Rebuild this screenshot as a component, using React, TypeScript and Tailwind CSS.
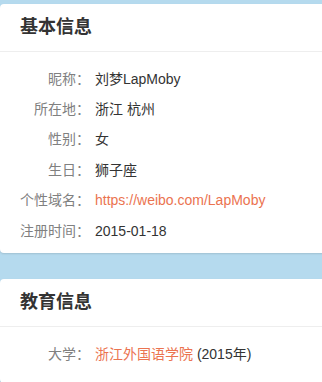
import React from "react";

// Profile info cards — label / value rows, weibo style
const BASIC = [
  { label: "昵称", value: "刘梦LapMoby" },
  { label: "所在地", value: "浙江 杭州" },
  { label: "性别", value: "女" },
  { label: "生日", value: "狮子座" },
  { label: "个性域名", value: "https://weibo.com/LapMoby", link: true },
  { label: "注册时间", value: "2015-01-18" },
];

function Row({ label, children }: { label: string; children: React.ReactNode }) {
  return (
    <div className="flex items-center h-[30.4px] text-[14px]">
      <span className="w-[70px] text-right text-[#808080] shrink-0">{label}：</span>
      <span className="ml-[5px] text-[#333] whitespace-nowrap">{children}</span>
    </div>
  );
}

function Card({ title, children, className = "" }: { title: string; children: React.ReactNode; className?: string }) {
  return (
    <div className={`bg-white rounded-l-[4px] w-[calc(100%+8px)] shadow-[0_1px_2px_rgba(0,0,0,0.12)] ${className}`}>
      <div className="h-[48px] flex items-center px-[20px] border-b border-[#eeeeee]">
        <h2 className="text-[18px] font-bold text-[#333]">{title}</h2>
      </div>
      {children}
    </div>
  );
}

export default function App() {
  return (
    <div
      className="min-h-screen bg-[#b5daee] pt-[4px] overflow-hidden"
      style={{ fontFamily: '"Liberation Sans", "Noto Sans CJK SC", sans-serif' }}
    >
      <Card title="基本信息" className="pb-[7px]">
        <div className="pt-[12px] pl-[20px]">
          {BASIC.map(({ label, value, link }) => (
            <Row key={label} label={label}>
              {link ? <span className="text-[#eb7350]">{value}</span> : value}
            </Row>
          ))}
        </div>
      </Card>

      <Card title="教育信息" className="mt-[26px] pb-[13px]">
        <div className="pt-[12px] pl-[20px]">
          <Row label="大学">
            <span className="text-[#eb7350]">浙江外国语学院</span> (2015年)
          </Row>
        </div>
      </Card>
    </div>
  );
}
